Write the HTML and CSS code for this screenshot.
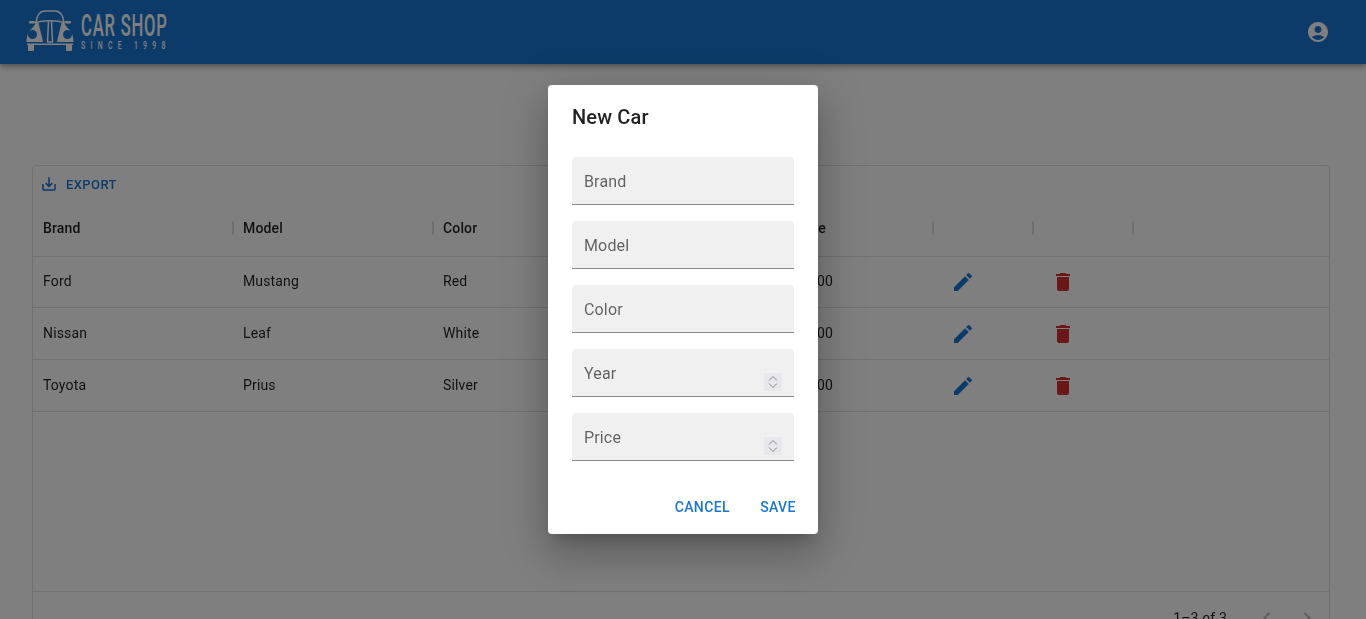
FILE: index.html
```html
<!DOCTYPE html>
<html lang="en">
<head>
<meta charset="UTF-8">
<meta name="viewport" content="width=device-width, initial-scale=1.0">
<title>Car Shop</title>
<link rel="stylesheet" href="styles.css">
</head>
<body>

<header class="appbar">
    <div class="logo">
        <svg class="logo-car" viewBox="0 0 48 42" width="48" height="42">
            <path class="car-line" d="M10 13 C11 4 14 1 19 1 H29 C34 1 37 4 38 13"/>
            <path class="car-line" d="M9 13 C17 10 31 10 39 13"/>
            <path class="car-line" d="M22.500 11 L21.500 32 M25.500 11 L26.500 32 M21 32 H27"/>
            <rect class="car-fill" x="3" y="11" width="6" height="2.500" rx="1"/>
            <rect class="car-fill" x="39" y="11" width="6" height="2.500" rx="1"/>
            <path class="car-fill" fill-rule="evenodd" d="M0.500 32 C0.500 26 2.500 21 6 18.500 L10 13 H12.500 C14 20 16 26 17 32 Z M6.500 20 A4.500 4.500 0 1 0 6.500 29 A4.500 4.500 0 1 0 6.500 20 Z"/>
            <path class="car-fill" fill-rule="evenodd" d="M47.500 32 C47.500 26 45.500 21 42 18.500 L38 13 H35.500 C34 20 32 26 31 32 Z M41.500 20 A4.500 4.500 0 1 1 41.500 29 A4.500 4.500 0 1 1 41.500 20 Z"/>
            <rect class="car-fill" x="1" y="33.500" width="46" height="1.500"/>
            <path class="car-fill" d="M2 35 H8 V40 Q8 41 7 41 H3 Q2 41 2 40 Z M40 35 H46 V40 Q46 41 45 41 H41 Q40 41 40 40 Z"/>
        </svg>
        <div class="logo-text">
            <span class="logo-name">CAR SHOP</span>
            <span class="logo-since">SINCE 1998</span>
        </div>
    </div>
    <svg class="account" viewBox="0 0 24 24" width="24" height="24"><path d="M12 2C6.48 2 2 6.48 2 12s4.48 10 10 10 10-4.48 10-10S17.52 2 12 2zm0 4c1.93 0 3.5 1.57 3.5 3.5S13.93 13 12 13s-3.500-1.570-3.500-3.500S10.070 6 12 6zm0 14c-2.030 0-4.430-.820-6.140-2.880C7.550 15.800 9.680 15 12 15s4.450.800 6.140 2.120C16.430 19.180 14.030 20 12 20z"/></svg>
</header>

<main class="page">
    <div class="grid">
        <div class="toolbar">
            <span class="export">
                <svg viewBox="0 0 24 24" width="18" height="18"><path d="M19 12v7H5v-7H3v7c0 1.100.9 2 2 2h14c1.100 0 2-.9 2-2v-7h-2zm-6 .670 2.590-2.580L17 11.500l-5 5-5-5 1.410-1.410L11 12.670V3h2z"/></svg>
                EXPORT
            </span>
        </div>
        <div class="row head">
            <div class="cell w200">Brand</div>
            <div class="cell w200">Model</div>
            <div class="cell w200">Color</div>
            <div class="cell w150">Year</div>
            <div class="cell w150">Price</div>
            <div class="cell w100"></div>
            <div class="cell w100"></div>
        </div>
        <div class="row">
            <div class="cell w200">Ford</div>
            <div class="cell w200">Mustang</div>
            <div class="cell w200">Red</div>
            <div class="cell w150">2021</div>
            <div class="cell w150">59000</div>
            <div class="cell w100"><svg class="edit" viewBox="0 0 24 24" width="24" height="24"><path d="M3 17.25V21h3.75L17.81 9.94l-3.75-3.75L3 17.25zM20.71 7.04c.39-.39.39-1.02 0-1.41l-2.34-2.34a.996.996 0 0 0-1.41 0l-1.83 1.83 3.75 3.75 1.83-1.83z"/></svg></div>
            <div class="cell w100"><svg class="trash" viewBox="0 0 24 24" width="24" height="24"><path d="M6 19c0 1.1.9 2 2 2h8c1.1 0 2-.9 2-2V7H6v12zM19 4h-3.5l-1-1h-5l-1 1H5v2h14V4z"/></svg></div>
        </div>
        <div class="row">
            <div class="cell w200">Nissan</div>
            <div class="cell w200">Leaf</div>
            <div class="cell w200">White</div>
            <div class="cell w150">2020</div>
            <div class="cell w150">30000</div>
            <div class="cell w100"><svg class="edit" viewBox="0 0 24 24" width="24" height="24"><path d="M3 17.25V21h3.75L17.81 9.94l-3.75-3.75L3 17.25zM20.71 7.04c.39-.39.39-1.02 0-1.41l-2.34-2.34a.996.996 0 0 0-1.41 0l-1.83 1.83 3.75 3.75 1.83-1.83z"/></svg></div>
            <div class="cell w100"><svg class="trash" viewBox="0 0 24 24" width="24" height="24"><path d="M6 19c0 1.1.9 2 2 2h8c1.1 0 2-.9 2-2V7H6v12zM19 4h-3.5l-1-1h-5l-1 1H5v2h14V4z"/></svg></div>
        </div>
        <div class="row">
            <div class="cell w200">Toyota</div>
            <div class="cell w200">Prius</div>
            <div class="cell w200">Silver</div>
            <div class="cell w150">2019</div>
            <div class="cell w150">29000</div>
            <div class="cell w100"><svg class="edit" viewBox="0 0 24 24" width="24" height="24"><path d="M3 17.25V21h3.75L17.81 9.94l-3.75-3.75L3 17.25zM20.71 7.04c.39-.39.39-1.02 0-1.41l-2.34-2.34a.996.996 0 0 0-1.41 0l-1.83 1.83 3.75 3.75 1.83-1.83z"/></svg></div>
            <div class="cell w100"><svg class="trash" viewBox="0 0 24 24" width="24" height="24"><path d="M6 19c0 1.1.9 2 2 2h8c1.1 0 2-.9 2-2V7H6v12zM19 4h-3.5l-1-1h-5l-1 1H5v2h14V4z"/></svg></div>
        </div>
        <div class="grid-empty"></div>
        <div class="grid-footer">
            <span class="count">1–3 of 3</span>
            <svg class="pager" viewBox="0 0 24 24" width="24" height="24"><path d="M15.41 7.41 14 6l-6 6 6 6 1.41-1.41L10.83 12z"/></svg>
            <svg class="pager" viewBox="0 0 24 24" width="24" height="24"><path d="M10 6 8.59 7.41 13.17 12l-4.58 4.59L10 18l6-6z"/></svg>
        </div>
    </div>
</main>

<div class="backdrop">
    <div class="dialog">
        <h2 class="dialog-title">New Car</h2>
        <div class="dialog-content">
            <div class="field"><input type="text" placeholder="Brand"></div>
            <div class="field"><input type="text" placeholder="Model"></div>
            <div class="field"><input type="text" placeholder="Color"></div>
            <div class="field">
                <input type="text" placeholder="Year">
                <svg class="spin" viewBox="0 0 18 18" width="18" height="18"><path d="M5 7.500 9 3.500 13 7.500M5 10.500 9 14.500 13 10.500"/></svg>
            </div>
            <div class="field">
                <input type="text" placeholder="Price">
                <svg class="spin" viewBox="0 0 18 18" width="18" height="18"><path d="M5 7.500 9 3.500 13 7.500M5 10.500 9 14.500 13 10.500"/></svg>
            </div>
        </div>
        <div class="dialog-actions">
            <button type="button">Cancel</button>
            <button type="button">Save</button>
        </div>
    </div>
</div>

</body>
</html>
```

FILE: styles.css
```css
html, body {
    height: 100%;
    overflow: hidden;
}
body {
    margin: 0;
    background-color: #fff;
    font-family: Roboto, "Liberation Sans", sans-serif;
    font-size: 14px;
    letter-spacing: 0.15px;
    color: rgba(0, 0, 0, 0.87);
}

/* top bar */
.appbar {
    height: 64px;
    padding: 0 36px 0 26px;
    background-color: #1976d2;
    box-shadow: 0 2px 4px -1px rgba(0,0,0,.2), 0 4px 5px rgba(0,0,0,.14), 0 1px 10px rgba(0,0,0,.12);
    display: flex;
    align-items: center;
    justify-content: space-between;
    position: relative;
}
.logo {
    display: flex;
    align-items: center;
    gap: 7px;
}
.logo-car {
    display: block;
    margin-top: -2px;
}
.car-line {
    fill: none;
    stroke: #fff;
    stroke-width: 1.5;
}
.car-fill {
    fill: #fff;
}
.logo-text {
    display: flex;
    flex-direction: column;
    color: #fff;
    width: 87px;
    margin-top: -3px;
}
.logo-name {
    font-size: 32px;
    line-height: 30px;
    font-weight: 500;
    letter-spacing: 1.5px;
    white-space: nowrap;
    transform: scaleX(0.52);
    transform-origin: left center;
}
.logo-since {
    font-size: 11px;
    line-height: 11px;
    letter-spacing: 8.6px;
    white-space: nowrap;
    font-weight: 500;
    transform: scaleX(0.62);
    transform-origin: left center;
}
.account {
    fill: #fff;
}

/* data grid */
.page {
    padding: 101px 36px 0 32px;
}
.grid {
    height: 500px;
    border: 1px solid #e0e0e0;
    border-radius: 4px;
    display: flex;
    flex-direction: column;
    will-change: opacity; /* own layer, gives the same text smoothing as the modal open */
}
.toolbar {
    height: 34px;
    padding: 4px 0 0 7px;
    box-sizing: border-box;
    display: flex;
    align-items: center;
    flex: none;
}
.export {
    display: flex;
    align-items: center;
    gap: 8px;
    margin-top: -2px;
    font-size: 13px;
    font-weight: 500;
    letter-spacing: 0.4px;
    color: #1976d2;
}
.export svg {
    fill: #1976d2;
}
.row {
    display: flex;
    flex: none;
    box-sizing: border-box;
    height: 52px;
    border-bottom: 1px solid #e0e0e0;
}
.row.head {
    height: 57px;
    font-weight: 500;
}
.head + .row {
    height: 51px;
}
.cell {
    box-sizing: border-box;
    padding: 0 10px 2px;
    display: flex;
    align-items: center;
    position: relative;
}
.head .cell {
    padding-bottom: 0;
}
.head .cell + .cell::before {
    content: "";
    position: absolute;
    left: -1px;
    top: 21px;
    width: 2px;
    height: 14px;
    background-color: #e0e0e0;
}
.head .cell:last-child::after {
    content: "";
    position: absolute;
    right: -1px;
    top: 21px;
    width: 2px;
    height: 14px;
    background-color: #e0e0e0;
}
.w200 { width: 200px; }
.w150 { width: 150px; }
.cell.w100 { width: 100px; padding: 0 18px; }
.edit { fill: #1976d2; }
.trash { fill: #d32f2f; }
.grid-empty {
    flex: none;
    box-sizing: border-box;
    height: 180px;
    border-bottom: 1px solid #e0e0e0;
}
.grid-footer {
    display: flex;
    align-items: center;
    height: 52px;
    padding-right: 10px;
    justify-content: flex-end;
    gap: 16px;
}
.count {
    margin-right: 12px;
}
.pager {
    fill: rgba(0, 0, 0, 0.26);
}

/* modal */
.backdrop {
    position: fixed;
    inset: 0;
    background-color: rgba(0, 0, 0, 0.5);
    display: flex;
    justify-content: center;
    align-items: flex-start;
}
.dialog {
    width: 270px;
    margin-top: 85px;
    background-color: #fff;
    border-radius: 4px;
    box-shadow: 0 11px 15px -7px rgba(0,0,0,.2), 0 24px 38px 3px rgba(0,0,0,.14), 0 9px 46px 8px rgba(0,0,0,.12);
    will-change: opacity;
}
.dialog-title {
    margin: 0;
    padding: 16px 24px;
    font-size: 20px;
    line-height: 32px;
    font-weight: 500;
    letter-spacing: 0.15px;
}
.dialog-content {
    padding: 8px 24px 20px;
    display: flex;
    flex-direction: column;
    gap: 16px;
}
.field {
    height: 48px;
    box-sizing: border-box;
    display: flex;
    background-color: #f0f0f0;
    border-bottom: 1px solid rgba(0, 0, 0, 0.42);
    border-radius: 4px 4px 0 0;
    padding: 0 12px;
}
.field input {
    flex: 1;
    min-width: 0;
    padding: 2px 0 0;
    border: none;
    outline: none;
    background: none;
    font-family: inherit;
    font-size: 16px;
    letter-spacing: 0.15px;
}
.field input::placeholder {
    color: rgba(0, 0, 0, 0.6);
    opacity: 1;
}
.spin {
    align-self: flex-end;
    margin-bottom: 5px;
    background-color: #e8e8ec;
}
.spin path {
    fill: none;
    stroke: #8a8a8a;
    stroke-width: 1;
}
.dialog-actions {
    padding: 8px 8px 9px;
    display: flex;
    justify-content: flex-end;
    gap: 8px;
}
.dialog-actions button {
    min-width: 64px;
    height: 36px;
    padding: 6px 8px;
    border: none;
    background: none;
    font-family: inherit;
    font-size: 14px;
    font-weight: 500;
    letter-spacing: 0.4px;
    text-transform: uppercase;
    color: #1976d2;
}
```
